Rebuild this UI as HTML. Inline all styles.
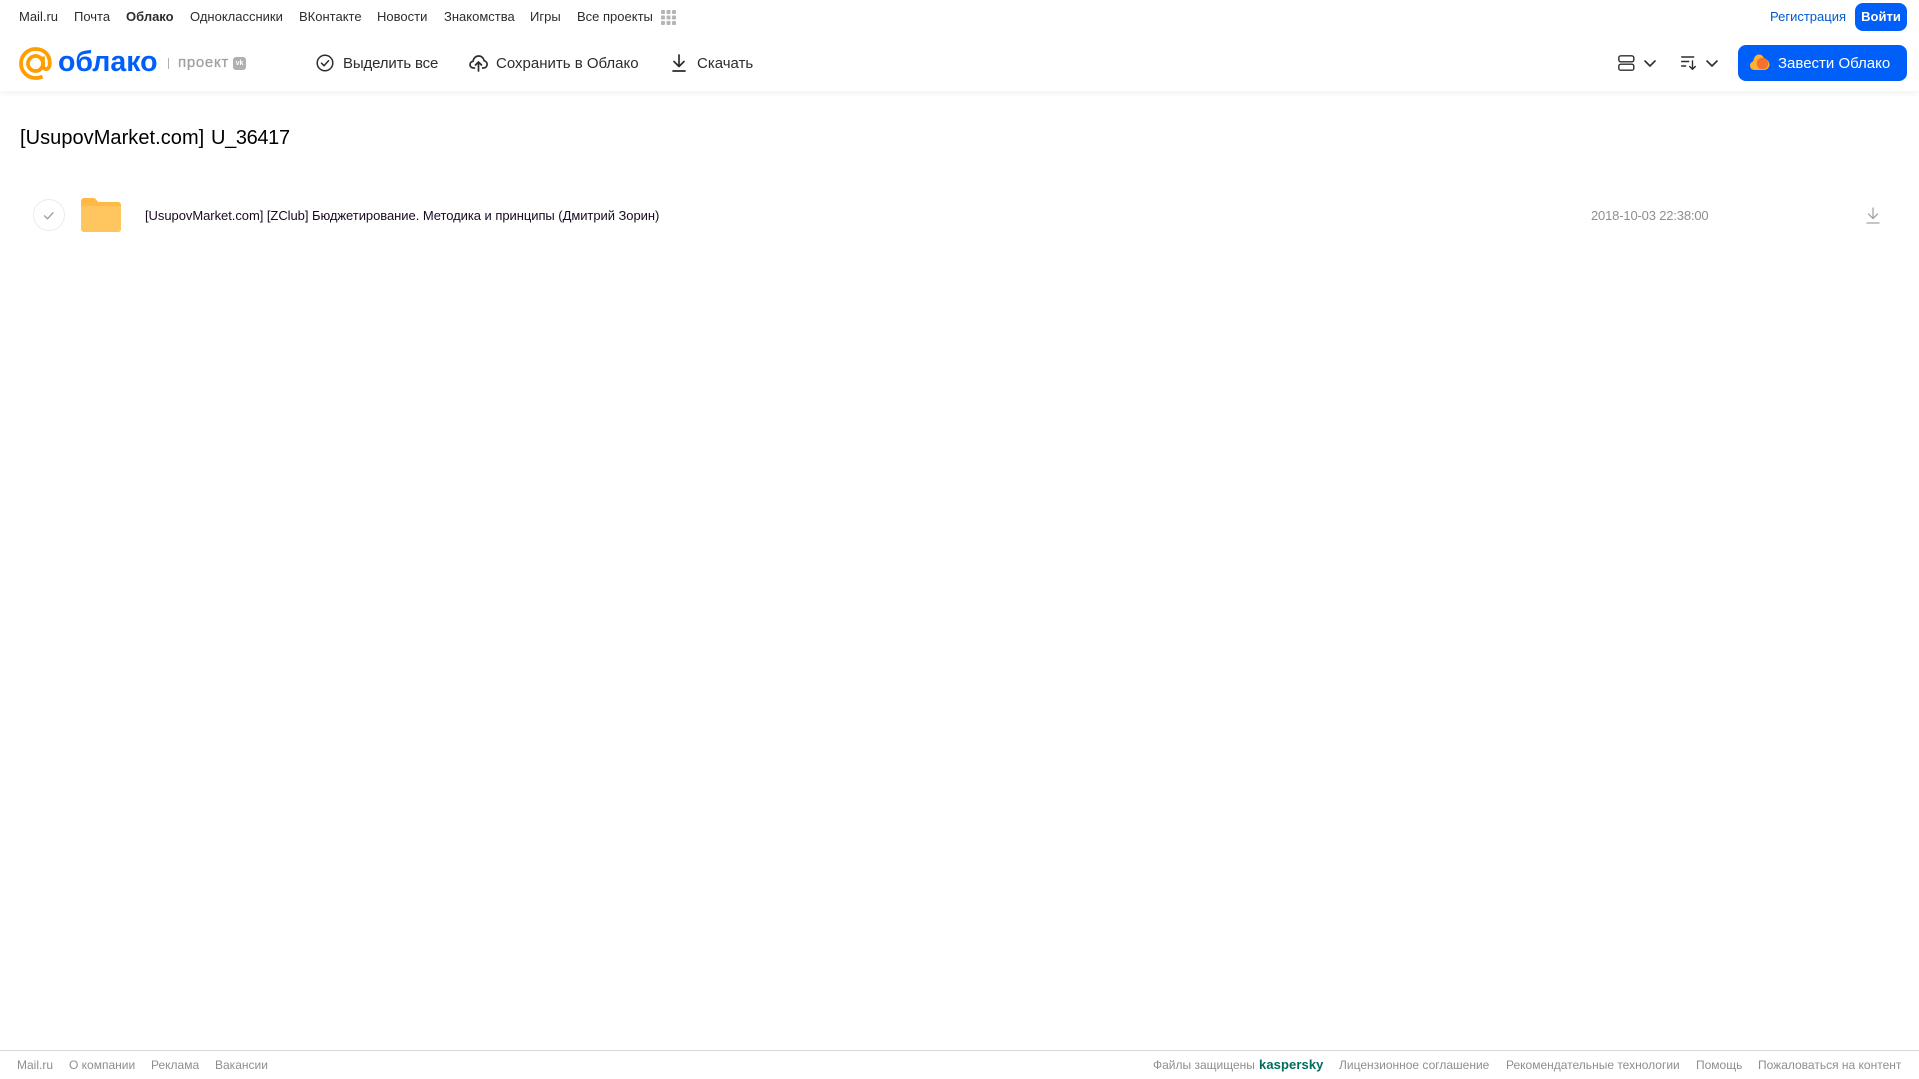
<!DOCTYPE html>
<html lang="ru"><head><meta charset="utf-8"><title>Облако</title>
<style>
html,body{margin:0;padding:0;background:#fff;width:1919px;height:1079px;overflow:hidden}
body{font-family:"Liberation Sans","DejaVu Sans",sans-serif;position:relative}
.t{position:absolute;white-space:nowrap;line-height:1}
.n{font-size:13px;color:#2c2d2e;top:10px}
.b{font-size:15px;color:#2c2d2e;top:56px}
.f{font-size:12px;color:#8f8f8f;top:1059px}
svg{position:absolute;overflow:visible}
</style></head><body>
<div style="position:absolute;left:0;top:0;width:1919px;height:91px;background:#fff;box-shadow:0 2px 6px rgba(0,0,0,.06)"></div>

<span class="t n" style="left:19px">Mail.ru</span>
<span class="t n" style="left:74px">Почта</span>
<span class="t n" style="left:126px;font-weight:bold">Облако</span>
<span class="t n" style="left:190px">Одноклассники</span>
<span class="t n" style="left:299px">ВКонтакте</span>
<span class="t n" style="left:377px">Новости</span>
<span class="t n" style="left:444px">Знакомства</span>
<span class="t n" style="left:530px">Игры</span>
<span class="t n" style="left:577px">Все проекты</span>
<svg style="left:661px;top:10px" width="15" height="15" fill="#b5b5b5"><rect x="0" y="0" width="4" height="4" rx="1"/><rect x="5.500" y="0" width="4" height="4" rx="1"/><rect x="11" y="0" width="4" height="4" rx="1"/><rect x="0" y="5.500" width="4" height="4" rx="1"/><rect x="5.500" y="5.500" width="4" height="4" rx="1"/><rect x="11" y="5.500" width="4" height="4" rx="1"/><rect x="0" y="11" width="4" height="4" rx="1"/><rect x="5.500" y="11" width="4" height="4" rx="1"/><rect x="11" y="11" width="4" height="4" rx="1"/></svg>

<svg style="left:19px;top:47px" width="33" height="33" viewBox="0 0 33 33" fill="none" stroke="#ff9e00" stroke-width="3.800"><circle cx="16.500" cy="16.500" r="7.500"/><path d="M24 9.500v9c0 5 6.500 5 6.800-1.500C31 7 24.500 2 16.500 2 8.500 2 2 8.500 2 16.500S8.500 31 16.500 31c3 0 5-.5 7-1.500"/></svg>
<span class="t" style="left:58px;top:48px;font-size:28.500px;font-weight:bold;color:#005ff9">облако</span>
<div style="position:absolute;left:168px;top:58px;width:1px;height:11px;background:#b0b0b0"></div>
<span class="t" style="left:178px;top:55px;font-size:15px;color:#a0a0a0;letter-spacing:.7px;-webkit-text-stroke:.3px #a0a0a0">проект</span>
<div style="position:absolute;left:233px;top:57px;width:13px;height:13px;border-radius:3px;background:#b0b0b0;color:#fff;font:bold 7px/13px 'Liberation Sans',sans-serif;text-align:center">vk</div>

<svg style="left:316px;top:54px" width="18" height="18" viewBox="0 0 18 18" fill="none" stroke="#2c2d2e" stroke-width="1.500"><circle cx="9" cy="9" r="7.800"/><path d="M5.500 9.200l2.500 2.500 4.500-5" stroke-linecap="round" stroke-linejoin="round"/></svg>
<span class="t b" style="left:343px;letter-spacing:-.15px">Выделить все</span>

<svg style="left:469px;top:54px" width="19" height="18" viewBox="0 0 19 18" fill="none" stroke="#2c2d2e" stroke-width="1.700" stroke-linecap="round" stroke-linejoin="round"><path d="M5.500 14H4.500C2.500 14 1 12.500 1 10.700 1 9 2.200 7.600 4 7.400 4.500 4 7 2 9.700 2c2.800 0 5 2 5.400 4.800 2 .3 3 2 3 3.600 0 2-1.500 3.600-3.500 3.600h-1"/><path d="M9.500 17V8.500M6.500 11l3-3 3 3"/></svg>
<span class="t b" style="left:496px">Сохранить в Облако</span>

<svg style="left:671px;top:54px" width="16" height="18" viewBox="0 0 16 18" fill="none" stroke="#2c2d2e" stroke-width="1.700" stroke-linecap="round" stroke-linejoin="round"><path d="M8 1v11M3 7.500L8 12.500l5-5M2 17h12"/></svg>
<span class="t b" style="left:697px">Скачать</span>

<span class="t n" style="left:1770px;color:#005bd1">Регистрация</span>
<div style="position:absolute;left:1855px;top:3px;width:52px;height:28px;border-radius:8px;background:#005ff9;color:#fff;font-size:13px;font-weight:bold;line-height:27px;text-align:center">Войти</div>

<svg style="left:1618px;top:55px" width="17" height="16" viewBox="0 0 17 16" fill="none" stroke="#2c2d2e" stroke-width="1.400"><rect x=".8" y=".8" width="15" height="6" rx="2"/><rect x=".8" y="9.200" width="15" height="6" rx="2"/></svg>
<svg style="left:1644px;top:60px" width="12" height="7" viewBox="0 0 12 7" fill="none" stroke="#2c2d2e" stroke-width="1.600" stroke-linecap="round" stroke-linejoin="round"><path d="M1 1l5 5 5-5"/></svg>
<svg style="left:1681px;top:56px" width="16" height="14" viewBox="0 0 16 14" fill="none" stroke="#2c2d2e" stroke-width="1.400" stroke-linecap="round" stroke-linejoin="round"><path d="M.7 1h12M.7 5.500h7M.7 10h4M11.500 5v8M8.700 10.500l2.800 2.800 2.800-2.800"/></svg>
<svg style="left:1706px;top:60px" width="12" height="7" viewBox="0 0 12 7" fill="none" stroke="#2c2d2e" stroke-width="1.600" stroke-linecap="round" stroke-linejoin="round"><path d="M1 1l5 5 5-5"/></svg>

<div style="position:absolute;left:1738px;top:45px;width:169px;height:36px;border-radius:8px;background:#005ff9"></div>
<svg style="left:1750px;top:54px" width="20" height="17" viewBox="0 0 20 17"><path d="M4.500 16C2 16 0 14 0 11.500 0 9.500 1.500 7.700 3.300 7.200 3.700 3.300 6 .5 9 .5c2.500 0 4.500 1.800 5 4.200 3 .3 5.500 2.800 5.500 5.800 0 3-2.500 5.500-5.500 5.500z" fill="#ffb12e"/><circle cx="12.500" cy="9.500" r="5.800" fill="#f5712d"/></svg>
<span class="t" style="left:1778px;top:55.500px;font-size:15px;color:#fff">Завести Облако</span>

<span class="t" style="left:20px;top:128px;font-size:20px;color:#000;letter-spacing:.05px">[UsupovMarket.com]</span>
<span class="t" style="left:211px;top:128px;font-size:20px;color:#000;letter-spacing:-.35px">U_36417</span>

<div style="position:absolute;left:33px;top:199px;width:30px;height:30px;border:1px solid #ececec;border-radius:50%"></div>
<svg style="left:43px;top:211px" width="12" height="9" viewBox="0 0 12 9" fill="none" stroke="#999" stroke-width="1.300" stroke-linecap="round" stroke-linejoin="round"><path d="M1.500 4.800l3 3 5.500-6"/></svg>

<svg style="left:81px;top:198px" width="40" height="34" viewBox="0 0 40 34"><path d="M0 3a3 3 0 0 1 3-3h9c2 0 2.800 1 3.500 2s1.500 2 3 2H37a3 3 0 0 1 3 3v24a3 3 0 0 1-3 3H3a3 3 0 0 1-3-3z" fill="#ffb944"/><path d="M0 8h40v23a3 3 0 0 1-3 3H3a3 3 0 0 1-3-3z" fill="#ffc65f"/></svg>

<span class="t" style="left:145px;top:209px;font-size:13px;color:#1a0a24;letter-spacing:-.05px">[UsupovMarket.com] [ZClub] Бюджетирование. Методика и принципы (Дмитрий Зорин)</span>
<span class="t" style="left:1591px;top:209px;font-size:13px;color:#8f8f8f;letter-spacing:-.17px">2018-10-03 22:38:00</span>
<svg style="left:1866px;top:207px" width="14" height="17" viewBox="0 0 14 17" fill="none" stroke="#a5a5a5" stroke-width="1.300" stroke-linecap="round" stroke-linejoin="round"><path d="M7 1v10.500M2.500 7L7 11.500 11.500 7M1 16h12"/></svg>

<div style="position:absolute;left:0;top:1050px;width:1919px;height:1px;background:#d9d9d9"></div>
<span class="t f" style="left:17px">Mail.ru</span>
<span class="t f" style="left:69px">О компании</span>
<span class="t f" style="left:151px">Реклама</span>
<span class="t f" style="left:215px">Вакансии</span>
<span class="t f" style="left:1153px">Файлы защищены</span>
<span class="t" style="left:1259px;top:1058px;font-size:13px;font-weight:bold;color:#006d5c;letter-spacing:.1px">kaspersky</span>
<span class="t f" style="left:1339px">Лицензионное соглашение</span>
<span class="t f" style="left:1506px">Рекомендательные технологии</span>
<span class="t f" style="left:1696px">Помощь</span>
<span class="t f" style="left:1758px">Пожаловаться на контент</span>
</body></html>
